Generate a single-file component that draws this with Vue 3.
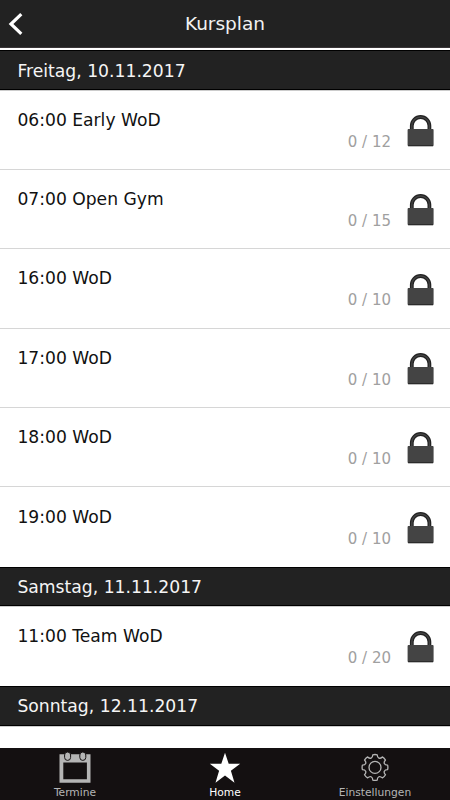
<script setup>
const days = [
  {
    date: 'Freitag, 10.11.2017',
    courses: [
      { title: '06:00 Early WoD', seats: '0 / 12' },
      { title: '07:00 Open Gym', seats: '0 / 15' },
      { title: '16:00 WoD', seats: '0 / 10' },
      { title: '17:00 WoD', seats: '0 / 10' },
      { title: '18:00 WoD', seats: '0 / 10' },
      { title: '19:00 WoD', seats: '0 / 10' },
    ],
  },
  { date: 'Samstag, 11.11.2017', courses: [{ title: '11:00 Team WoD', seats: '0 / 20' }] },
  { date: 'Sonntag, 12.11.2017', courses: [] },
]

// Outline of the eight-toothed gear
const gear = (() => {
  const point = (r, deg) => {
    const a = (deg * Math.PI) / 180
    return `${(14 + r * Math.sin(a)).toFixed(2)} ${(14 - r * Math.cos(a)).toFixed(2)}`
  }
  let d = `M${point(12.8, -10)}`
  for (let i = 0; i < 8; i++) {
    const c = i * 45
    d += `Q${point(13.2, c)} ${point(12.8, c + 10)}`
    d += `C${point(9.4, c + 14)} ${point(9.4, c + 31)} ${point(12.8, c + 35)}`
  }
  return d + 'Z'
})()
</script>

<template>
  <div class="app">
    <header class="top">
      <svg class="back" viewBox="0 0 16 24"><path d="M13.3 2.2 3 12l10.3 9.8" /></svg>
      <h1>Kursplan</h1>
    </header>
    <main class="list">
      <section v-for="day in days" :key="day.date">
        <h2>{{ day.date }}</h2>
        <div v-for="c in day.courses" :key="c.title" class="row">
          <span class="title">{{ c.title }}</span>
          <span class="seats">{{ c.seats }}</span>
          <svg class="lock" viewBox="0.4 -0.3 28 32">
            <path class="shackle" d="M5.2 14V10.5a8.8 8.8 0 0 1 17.6 0V14" />
            <path class="shackle-core" d="M5.2 14V10.5a8.8 8.8 0 0 1 17.6 0V14" />
            <rect x="1" y="13.8" width="26" height="17" rx=".8" />
            <path class="edge" d="M1.5 30.5h25" />
          </svg>
        </div>
      </section>
    </main>
    <nav class="tabs">
      <a class="tab">
        <svg viewBox="0 0 32 32">
          <path class="fill" fill-rule="evenodd" d="M.5 2.2h31v28.6H.5zM4.3 10.6v16.6h23.6v-16.6z" />
          <rect class="ring" x="5.6" y="0" width="6" height="8.4" rx="3" />
          <rect class="ring" x="20.8" y="0" width="6" height="8.4" rx="3" />
        </svg>
        <span>Termine</span>
      </a>
      <a class="tab active">
        <svg viewBox="0 0 32 32">
          <path class="fill" d="M16 .8 19.7 11.8H31.2L21.9 18.8 25.5 30.8 16 23.6 6.5 30.8 10.1 18.8.8 11.8H12.3Z" />
        </svg>
        <span>Home</span>
      </a>
      <a class="tab">
        <svg viewBox="-2 -1.4 32 32">
          <path class="line" :d="gear" />
          <circle class="line" cx="14" cy="14" r="6" />
        </svg>
        <span>Einstellungen</span>
      </a>
    </nav>
  </div>
</template>

<style>
body { margin: 0; background: #fff; }
</style>

<style scoped>
.app {
  display: flex;
  flex-direction: column;
  width: 450px;
  height: 800px;
  overflow: hidden;
  background: #fff;
  font-family: "DejaVu Sans", sans-serif;
}
.top {
  box-sizing: border-box;
  flex: none;
  display: grid;
  grid-template-columns: 40px 1fr 40px;
  align-items: center;
  height: 48px;
  background: #222;
  border-bottom: 1px solid #3a3638;
}
.back { width: 16px; height: 24px; margin-left: 8px; }
.back path { fill: none; stroke: #fff; stroke-width: 3.2; }
h1 { margin: 0; font-size: 18.5px; font-weight: 400; line-height: 24px; text-align: center; color: #f2f2f2; }
.list { flex: 1; min-height: 0; padding-top: 2px; overflow: hidden; }
h2 {
  box-sizing: border-box;
  height: 39.7px;
  margin: 0;
  padding: 0 17.4px;
  border: solid #000;
  border-width: 1px 0;
  background: #222;
  box-shadow: 0 1px #ccc;
  color: #f5f5f5;
  font-size: 17.2px;
  font-weight: 400;
  line-height: 39px;
}
section:first-child h2 { height: 40.4px; line-height: 40px; }
.row {
  box-sizing: border-box;
  display: flex;
  align-items: flex-start;
  height: 79.4px;
  padding: 0 15.4px 0 17.4px;
  border-bottom: 1px solid #d6d6d6;
}
.row:last-child { border-bottom-color: transparent; }
.title { flex: 1; margin-top: 19.3px; font-size: 17.15px; line-height: 20px; color: #111; }
.seats { margin: 41.3px 15.6px 0 0; font-size: 15px; line-height: 20px; color: #a0a0a0; }
.lock { width: 28px; height: 32px; margin-top: 24.4px; }
.lock rect { fill: #444; }
.shackle { fill: none; stroke: #222; stroke-width: 3.8; }
.shackle-core { fill: none; stroke: #444; stroke-width: 1.4; }
.edge { stroke: #222; stroke-width: 1; }
.tabs { flex: none; display: grid; grid-template-columns: repeat(3, 1fr); height: 52px; background: #141011; }
.tab { display: flex; flex-direction: column; align-items: center; padding-top: 4px; color: #b5b5b5; font-size: 10.7px; line-height: 14px; }
.tab svg { width: 32px; height: 32px; margin-bottom: 2px; }
.active { color: #fff; }
.fill { fill: currentColor; }
.ring { fill: #b5b5b5; stroke: #141011; stroke-width: 1; }
.line { fill: none; stroke: currentColor; stroke-width: 1.3; stroke-linejoin: round; }
</style>
